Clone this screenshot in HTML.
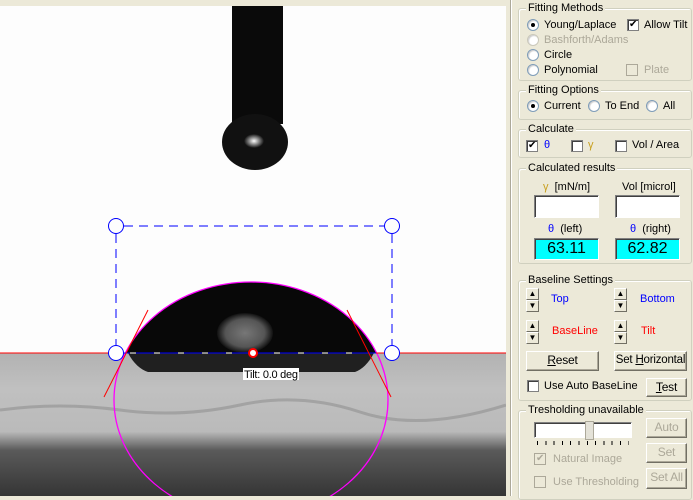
<!DOCTYPE html>
<html><head><meta charset="utf-8"><style>
*{margin:0;padding:0;box-sizing:border-box}
body{width:693px;height:496px;overflow:hidden;background:#ece9d8;font-family:"Liberation Sans",sans-serif;font-size:11px;color:#000;position:relative}
.a{position:absolute;white-space:nowrap}
.g{position:absolute;border:1px solid #d0d0bf;border-radius:3px;box-shadow:inset 1px 1px 0 #fff}
.gl{position:absolute;background:#ece9d8;padding:0 2px;font-size:11px;line-height:12px}
.rb{position:absolute;width:12px;height:12px;border-radius:50%;background:#fff;border:1px solid #7f9db9;box-shadow:inset 1px 1px 1px #ccc}
.rb.on::after{content:"";position:absolute;left:3px;top:3px;width:4px;height:4px;border-radius:50%;background:#000}
.cb{position:absolute;width:12px;height:12px;background:#fff;border:1px solid #808080;box-shadow:inset 1px 1px 0 #404040}
.cb.on::after{content:"✔";position:absolute;left:1px;top:-2px;font-size:10px;line-height:14px;font-family:"DejaVu Sans",sans-serif}
.cb.dis{background:#ece9d8;border-color:#aca899;box-shadow:none}
.dis{color:#aca899}
.btn{position:absolute;background:#ece9d8;border:1px solid;border-color:#fff #716f64 #716f64 #fff;box-shadow:inset -1px -1px 0 #aca899;text-align:center;font-size:12px;line-height:17px;white-space:nowrap;letter-spacing:-0.2px}
.box{position:absolute;background:#fff;border:1px solid;border-color:#808080 #fff #fff #808080;box-shadow:inset 1px 1px 0 #404040}
.cy{background:#00ffff;text-align:center;font-size:16px;line-height:20px}
.sp{position:absolute;width:13px;height:24px}
.sp div{position:absolute;left:0;width:13px;height:12px;background:#ece9d8;border:1px solid;border-color:#fff #716f64 #716f64 #fff;font-size:8px;line-height:10px;text-align:center}
</style></head><body>
<svg class="a" style="left:0;top:6px" width="506" height="490" viewBox="0 6 506 490">
<defs>
<linearGradient id="bg" x1="0" y1="353" x2="0" y2="496" gradientUnits="userSpaceOnUse">
<stop offset="0" stop-color="#b2b2b2"/><stop offset="0.25" stop-color="#c0c0c0"/><stop offset="0.55" stop-color="#bababa"/><stop offset="0.68" stop-color="#5a5a5a"/><stop offset="1" stop-color="#353535"/></linearGradient>
<radialGradient id="hl" cx="0.5" cy="0.5" r="0.5"><stop offset="0" stop-color="#fff"/><stop offset="1" stop-color="#111"/></radialGradient>
<radialGradient id="hl2" cx="0.5" cy="0.5" r="0.5"><stop offset="0" stop-color="#777"/><stop offset="0.7" stop-color="#555"/><stop offset="1" stop-color="#111"/></radialGradient>
<clipPath id="cp"><rect x="100" y="270" width="300" height="83"/></clipPath>
</defs>
<rect x="0" y="6" width="506" height="490" fill="#fdfdfd"/>
<rect x="0" y="353" width="506" height="143" fill="url(#bg)"/>
<path d="M0 410 Q60 402 120 410 T240 405 T360 412 T506 405" stroke="#888" stroke-width="3" fill="none" opacity="0.5"/>
<rect x="232" y="6" width="51" height="118" fill="#0a0a0a"/>
<ellipse cx="255" cy="142" rx="33" ry="28" fill="#111"/>
<ellipse cx="254" cy="141" rx="10" ry="7" fill="url(#hl)"/>
<ellipse cx="251" cy="400" rx="137" ry="118" fill="#080808" clip-path="url(#cp)"/>
<ellipse cx="245" cy="333" rx="28" ry="20" fill="url(#hl2)"/>
<path d="M128 353 L374 353 Q366 368 355 372 L148 372 Q136 368 128 353Z" fill="#202020"/>
<ellipse cx="251" cy="400" rx="137" ry="118" fill="none" stroke="#ff00ff" stroke-width="1.3"/>
<line x1="0" y1="353" x2="124" y2="353" stroke="#f00"/>
<line x1="376" y1="353" x2="506" y2="353" stroke="#f00"/>
<line x1="124" y1="353" x2="376" y2="353" stroke="#00f"/>
<line x1="130" y1="353" x2="370" y2="353" stroke="#fff" stroke-dasharray="6 18"/>
<line x1="104" y1="397" x2="148" y2="310" stroke="#f00"/>
<line x1="347" y1="310" x2="391" y2="397" stroke="#f00"/>
<g stroke="#00f" fill="none" stroke-width="1">
<path d="M124 226H384M116 234V345M392 234V345" stroke-dasharray="9 6"/>
<circle cx="116" cy="226" r="7.5"/><circle cx="392" cy="226" r="7.5"/>
<circle cx="116" cy="353" r="7.5" fill="#fff"/><circle cx="392" cy="353" r="7.5" fill="#fff"/>
</g>
<circle cx="253" cy="353" r="4" fill="#fff" stroke="#f00" stroke-width="2"/>
<rect x="243" y="368" width="56" height="12" fill="#fff"/>
<text x="244" y="378" font-family="Liberation Sans" font-size="11" textLength="54">Tilt: 0.0 deg</text>
</svg>
<div class="a" style="left:510px;top:0;width:1px;height:496px;background:#aca899"></div>
<div class="a" style="left:511px;top:0;width:1px;height:496px;background:#fff"></div>

<div class="g" style="left:518px;top:8px;width:174px;height:73px"></div><div class="gl" style="left:526px;top:2px">Fitting Methods</div>
<div class="rb on" style="left:527px;top:19px"></div><div class="a" style="left:544px;top:19px">Young/Laplace</div>
<div class="cb on" style="left:627px;top:19px"></div><div class="a" style="left:644px;top:19px">Allow Tilt</div>
<div class="rb" style="left:527px;top:34px;border-color:#cac8bb"></div><div class="a dis" style="left:544px;top:34px">Bashforth/Adams</div>
<div class="rb" style="left:527px;top:49px"></div><div class="a" style="left:544px;top:49px">Circle</div>
<div class="rb" style="left:527px;top:64px"></div><div class="a" style="left:544px;top:64px">Polynomial</div>
<div class="cb dis" style="left:626px;top:64px"></div><div class="a dis" style="left:644px;top:64px">Plate</div>

<div class="g" style="left:518px;top:90px;width:174px;height:30px"></div><div class="gl" style="left:526px;top:84px">Fitting Options</div>
<div class="rb on" style="left:527px;top:100px"></div><div class="a" style="left:544px;top:100px">Current</div>
<div class="rb" style="left:588px;top:100px"></div><div class="a" style="left:605px;top:100px">To End</div>
<div class="rb" style="left:646px;top:100px"></div><div class="a" style="left:663px;top:100px">All</div>

<div class="g" style="left:518px;top:129px;width:174px;height:29px"></div><div class="gl" style="left:526px;top:123px">Calculate</div>
<div class="cb on" style="left:526px;top:140px"></div><div class="a" style="left:544px;top:139px;color:#00f">θ</div>
<div class="cb" style="left:571px;top:140px"></div><div class="a" style="left:588px;top:139px;color:#c8a020">γ</div>
<div class="cb" style="left:615px;top:140px"></div><div class="a" style="left:632px;top:139px">Vol / Area</div>

<div class="g" style="left:518px;top:168px;width:174px;height:96px"></div><div class="gl" style="left:526px;top:162px">Calculated results</div>
<div class="a" style="left:543px;top:181px"><span style="color:#c8a020">γ</span>&nbsp; [mN/m]</div>
<div class="a" style="left:622px;top:181px">Vol [microl]</div>
<div class="box" style="left:534px;top:195px;width:65px;height:23px"></div>
<div class="box" style="left:615px;top:195px;width:65px;height:23px"></div>
<div class="a" style="left:548px;top:223px"><span style="color:#00f">θ</span>&nbsp; (left)</div>
<div class="a" style="left:630px;top:223px"><span style="color:#00f">θ</span>&nbsp; (right)</div>
<div class="box cy" style="left:534px;top:238px;width:65px;height:22px">63.11</div>
<div class="box cy" style="left:615px;top:238px;width:65px;height:22px">62.82</div>

<div class="g" style="left:518px;top:280px;width:174px;height:121px"></div><div class="gl" style="left:526px;top:274px">Baseline Settings</div>
<div class="sp" style="left:526px;top:288px"><div style="top:0">▲</div><div style="top:12px">▼</div></div><div class="a" style="left:551px;top:293px;color:#00f">Top</div>
<div class="sp" style="left:614px;top:288px"><div style="top:0">▲</div><div style="top:12px">▼</div></div><div class="a" style="left:640px;top:293px;color:#00f">Bottom</div>
<div class="sp" style="left:526px;top:320px"><div style="top:0">▲</div><div style="top:12px">▼</div></div><div class="a" style="left:552px;top:325px;color:#f00">BaseLine</div>
<div class="sp" style="left:614px;top:320px"><div style="top:0">▲</div><div style="top:12px">▼</div></div><div class="a" style="left:641px;top:325px;color:#f00">Tilt</div>
<div class="btn" style="left:526px;top:351px;width:73px;height:20px"><u>R</u>eset</div>
<div class="btn" style="left:614px;top:351px;width:73px;height:20px;font-size:11.5px">Set <u>H</u>orizontal</div>
<div class="cb" style="left:527px;top:380px"></div><div class="a" style="left:544px;top:380px">Use Auto BaseLine</div>
<div class="btn" style="left:646px;top:378px;width:41px;height:19px"><u>T</u>est</div>

<div class="g" style="left:518px;top:410px;width:174px;height:90px"></div><div class="gl" style="left:526px;top:404px">Tresholding unavailable</div>
<div class="box" style="left:534px;top:422px;width:98px;height:16px"></div>
<div class="a" style="left:585px;top:421px;width:9px;height:19px;background:#e4e2d8;border:1px solid #aca899"></div>
<div class="a" style="left:537px;top:441px;width:92px;height:4px;background:repeating-linear-gradient(90deg,#000 0 1px,transparent 1px 8.3px)"></div>
<div class="btn dis" style="left:646px;top:418px;width:41px;height:20px">Auto</div>
<div class="btn dis" style="left:646px;top:443px;width:41px;height:20px">Set</div>
<div class="btn dis" style="left:646px;top:468px;width:41px;height:21px">Set All</div>
<div class="cb dis on" style="left:534px;top:453px;color:#aca899"></div><div class="a dis" style="left:553px;top:453px">Natural Image</div>
<div class="cb dis" style="left:534px;top:476px"></div><div class="a dis" style="left:553px;top:476px">Use Thresholding</div>
</body></html>
